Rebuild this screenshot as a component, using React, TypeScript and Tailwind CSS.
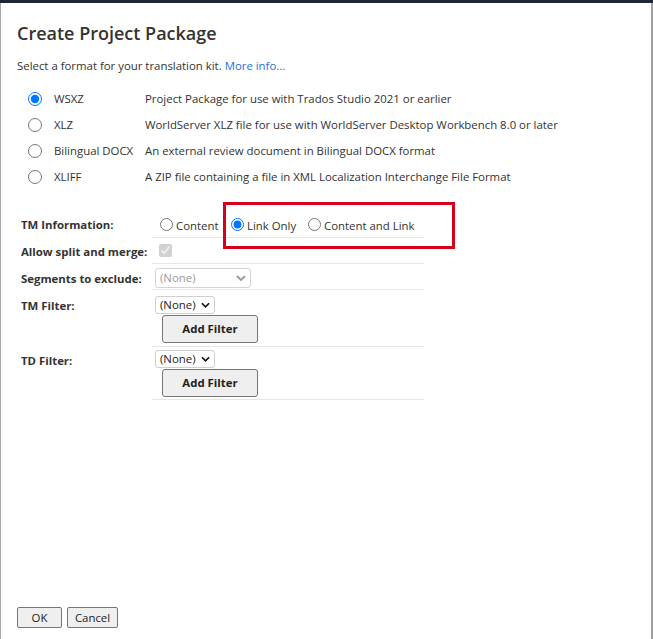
import React from 'react';

const formats = [
  { id: 'wsxz', label: 'WSXZ', desc: 'Project Package for use with Trados Studio 2021 or earlier', checked: true },
  { id: 'xlz', label: 'XLZ', desc: 'WorldServer XLZ file for use with WorldServer Desktop Workbench 8.0 or later' },
  { id: 'docx', label: 'Bilingual DOCX', desc: 'An external review document in Bilingual DOCX format' },
  { id: 'xliff', label: 'XLIFF', desc: 'A ZIP file containing a file in XML Localization Interchange File Format' },
];

const Chevron = ({ className }: { className?: string }) => (
  <svg viewBox="0 0 10 6" className={className} fill="none" stroke="currentColor" strokeWidth="1.8">
    <path d="M1 1l4 4 4-4" />
  </svg>
);

const FakeSelect = ({ disabled }: { disabled?: boolean }) => (
  <div
    className={`flex items-center rounded-[3px] border bg-white pl-[4px] text-[11.4px] leading-none ${
      disabled
        ? 'h-[20px] w-[96px] border-[#d4d4d4] text-[#9a9a9a]'
        : 'h-[18px] w-[60px] border-[#cfcfcf] text-[#222]'
    }`}
  >
    <span className="flex-1">(None)</span>
    <Chevron className={`mr-[4px] ${disabled ? 'h-[6px] w-[10px] text-[#9a9a9a]' : 'h-[6px] w-[9px] text-[#111]'}`} />
  </div>
);

const AddFilter = () => (
  <button className="ml-[7px] mt-[1px] h-[28px] w-[96px] shrink-0 rounded-[3px] border border-[#767676] bg-[#efefef] text-[11.4px] font-bold text-[#222]">
    Add Filter
  </button>
);

export default function App() {
  return (
    <div className="h-[639px] w-[653px] bg-[#1f2637] pt-[3px] font-['Open_Sans',sans-serif] text-[#333]">
      <div className="relative flex h-[636px] w-[651px] flex-col border-l border-[#a8a8a8] bg-white">
        <h1 className="pl-[16px] pt-[17px] text-[18px] font-semibold leading-[26px] text-[#333]">Create Project Package</h1>
        <p className="pl-[16px] pt-[12px] text-[11.4px] leading-[16px]">
          Select a format for your translation kit. <span className="text-[#2a6ed8]">More info...</span>
        </p>

        <div className="mt-[12px] flex flex-col">
          {formats.map((f) => (
            <label key={f.id} className="flex h-[26px] items-center text-[11.4px]">
              <input
                type="radio"
                name="format"
                defaultChecked={f.checked}
                className="ml-[27px] h-[14px] w-[14px] accent-[#0075ff]"
              />
              <span className="ml-[12px] w-[91px] whitespace-nowrap">{f.label}</span>
              <span className="whitespace-nowrap">{f.desc}</span>
            </label>
          ))}
        </div>

        <div className="ml-[16px] mt-[22px] flex flex-col text-[11.4px]">
          <div className="flex h-[26px]">
            <div className="w-[135px] whitespace-nowrap pl-[4px] pt-[4px] font-bold">TM Information:</div>
            <div className="flex w-[272px] items-center border-b border-[#e6e6e6] pl-[8px]">
              <input type="radio" name="tm" className="m-0 h-[13px] w-[13px] accent-[#0075ff]" />
              <span className="ml-[3px] mt-[3px] w-[44px] whitespace-nowrap">Content</span>
              <input type="radio" name="tm" defaultChecked className="m-0 ml-[11px] h-[13px] w-[13px] accent-[#0075ff]" />
              <span className="ml-[3px] mt-[3px] w-[49px] whitespace-nowrap">Link Only</span>
              <input type="radio" name="tm" className="m-0 ml-[12px] h-[13px] w-[13px] accent-[#0075ff]" />
              <span className="ml-[3px] mt-[3px] whitespace-nowrap">Content and Link</span>
            </div>
          </div>
          <div className="flex h-[26px]">
            <div className="w-[135px] whitespace-nowrap pl-[4px] pt-[5px] font-bold">Allow split and merge:</div>
            <div className="flex w-[272px] items-center border-b border-[#e6e6e6] pl-[7px]">
              <input type="checkbox" checked disabled readOnly className="m-0 h-[13px] w-[13px]" />
            </div>
          </div>
          <div className="flex h-[26px]">
            <div className="w-[135px] whitespace-nowrap pl-[4px] pt-[6px] font-bold">Segments to exclude:</div>
            <div className="flex w-[272px] items-center border-b border-[#e6e6e6] pl-[3px] pt-[2px]">
              <FakeSelect disabled />
            </div>
          </div>
          <div className="flex h-[57px]">
            <div className="w-[135px] whitespace-nowrap pl-[4px] pt-[7px] font-bold">TM Filter:</div>
            <div className="flex w-[272px] flex-col items-start border-b border-[#e6e6e6] pl-[3px] pt-[6px]">
              <FakeSelect />
              <AddFilter />
            </div>
          </div>
          <div className="flex h-[53px]">
            <div className="w-[135px] whitespace-nowrap pl-[4px] pt-[5px] font-bold">TD Filter:</div>
            <div className="flex w-[272px] flex-col items-start border-b border-[#e6e6e6] pl-[3px] pt-[3px]">
              <FakeSelect />
              <AddFilter />
            </div>
          </div>
        </div>

        <div className="mt-auto flex gap-[5px] pb-[11px] pl-[16px]">
          <button className="h-[21px] w-[45px] rounded-[2px] border border-[#767676] bg-[#efefef] text-[11.4px] text-[#222]">OK</button>
          <button className="h-[21px] w-[51px] rounded-[2px] border border-[#767676] bg-[#efefef] text-[11.4px] text-[#222]">Cancel</button>
        </div>

        <div className="pointer-events-none absolute left-[222px] top-[199px] h-[47px] w-[232px] border-[3px] border-[#d6001c]" />
        <div className="absolute right-[-2px] top-0 h-[636px] w-[2px] bg-[#a0a0a0]" />
      </div>
    </div>
  );
}
